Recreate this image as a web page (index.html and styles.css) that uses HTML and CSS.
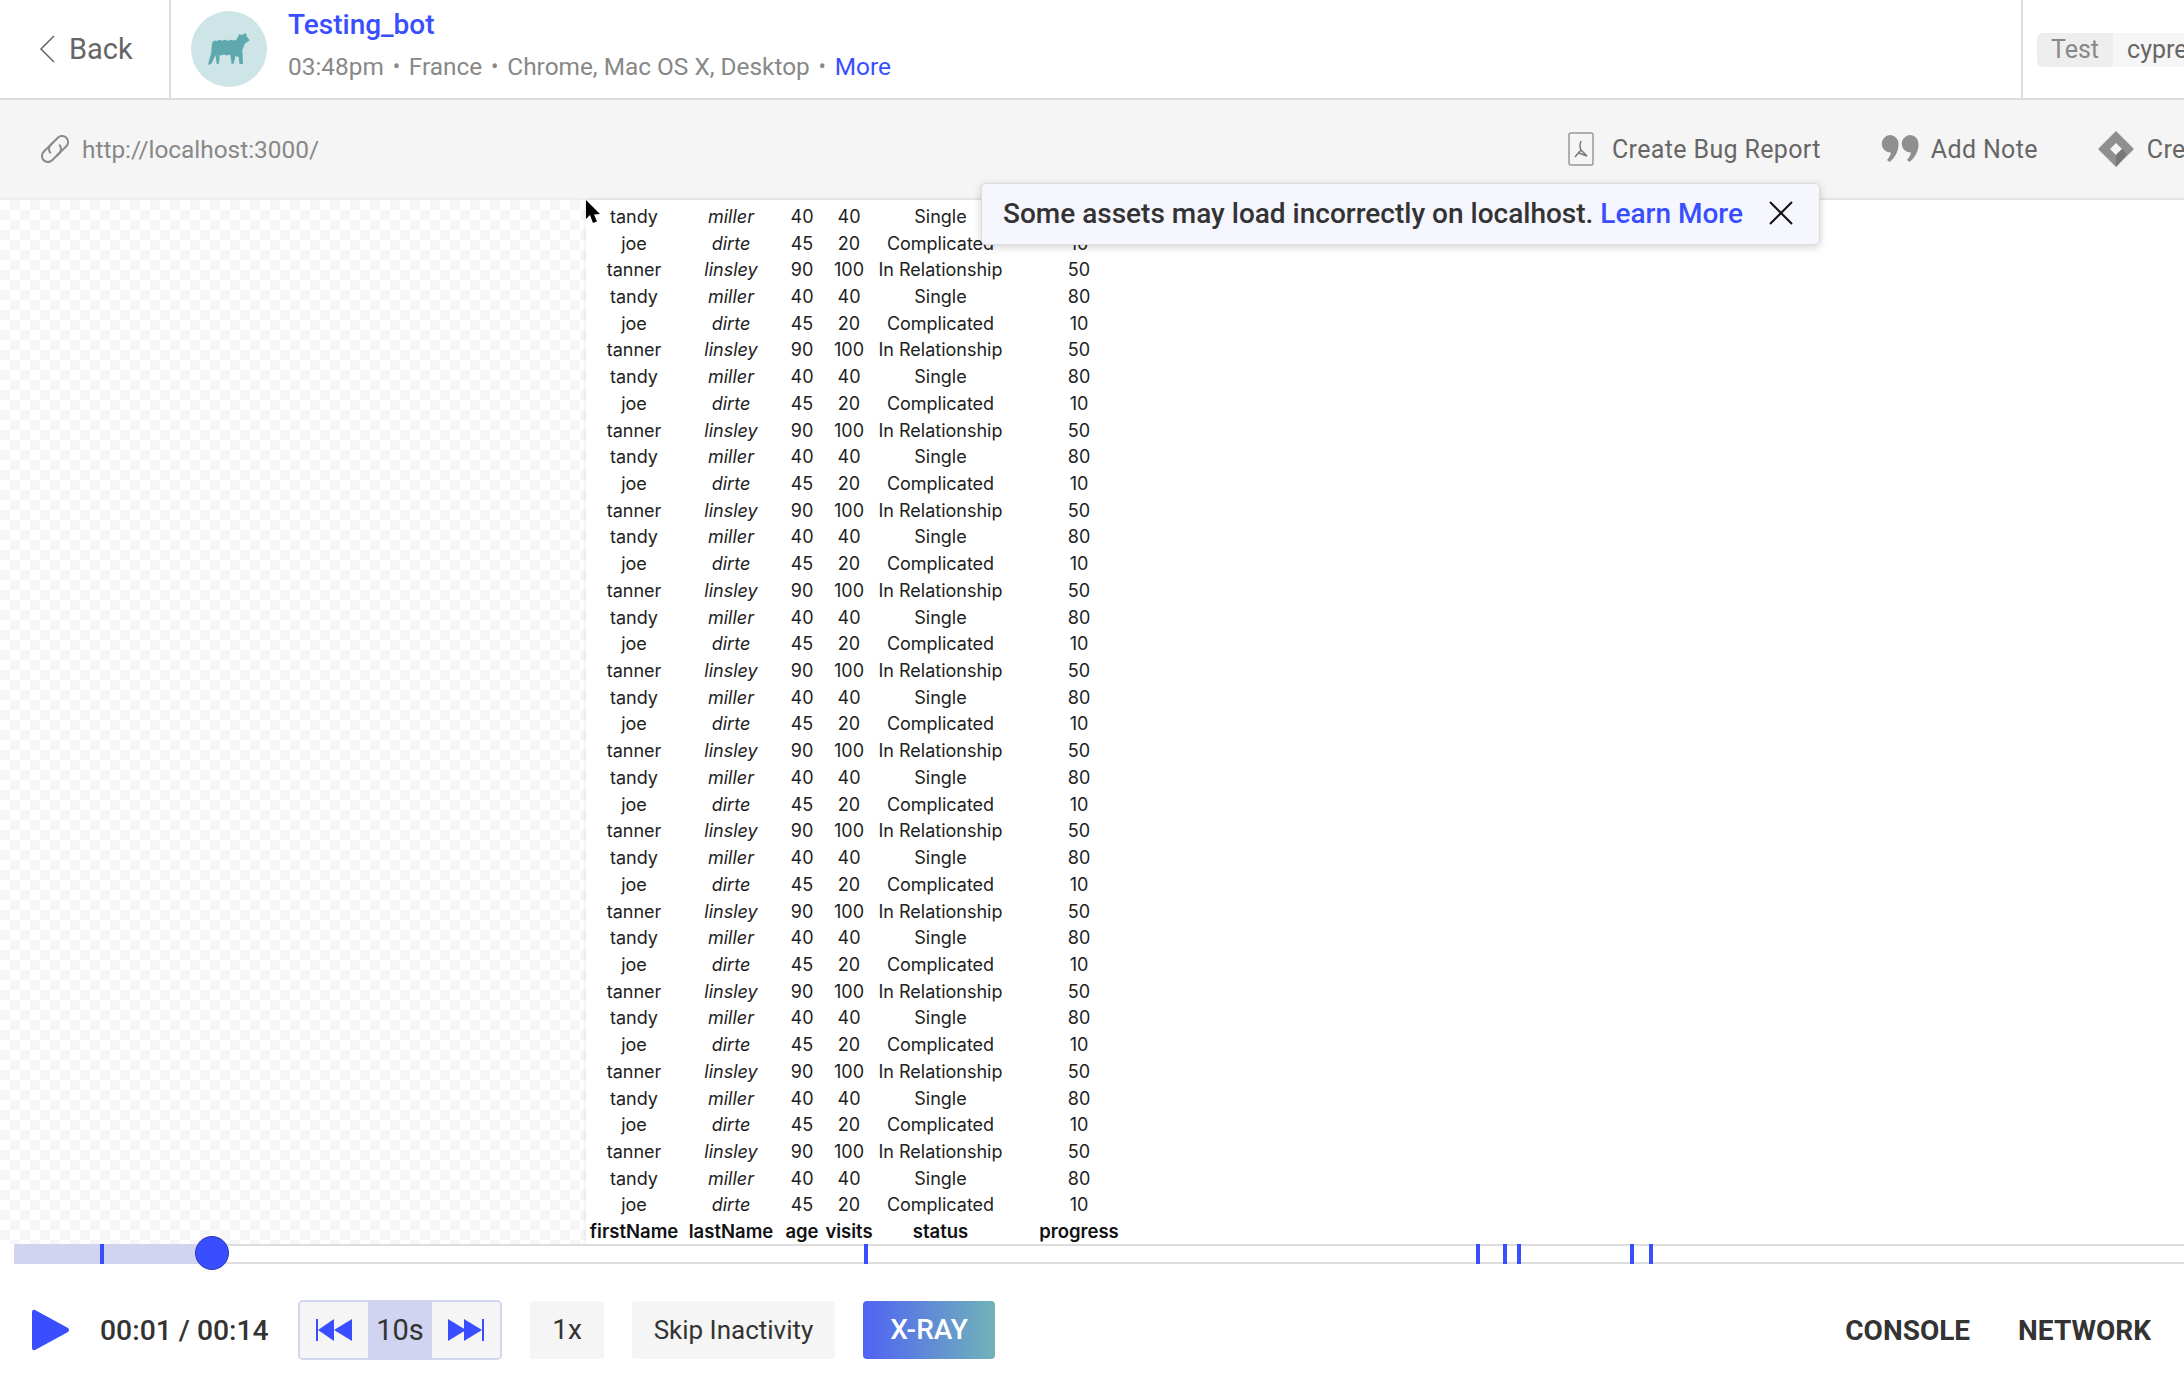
FILE: index.html
```html
<!DOCTYPE html>
<html lang="en">
<head>
  <meta charset="UTF-8">
  <title>Session Replay</title>
  <link rel="stylesheet" href="styles.css">
</head>
<body>
  <!-- Top bar -->
  <div class="topbar">
    <div class="back">
      <svg class="back-icon" width="16" height="28" viewBox="0 0 16 28"><path d="M15 1 L2 14 L15 27" fill="none" stroke="#666" stroke-width="1.500"/></svg>
      <span>Back</span>
    </div>
    <div class="user">
      <div class="avatar">
        <svg width="42" height="32" viewBox="0 0 42 32"><path d="M31.700 0.700 L33.300 2.300 L37.700 0 L39 4 L41.700 7.300 L36.700 10.700 L34.300 17.300 L35 30.700 L31.500 31.300 L30.700 24 L27.500 23 L25.700 30.700 L23.500 30.700 L22.300 21.500 L19 22.500 L16 21.500 L13 22.500 L11.700 22 L11 30.700 L8.800 31.300 L7.500 22.300 L3.300 30.700 L0 32 L3.300 19 L3.500 15 L4.300 9 L7 7.500 L9 8 L11.700 6.800 L14 7.800 L17 6.800 L20 7.800 L23 6.800 L26 7.500 L28.300 6.700 Z" fill="#5fa8ad"/></svg>
      </div>
      <div class="user-info">
        <a class="user-name">Testing_bot</a>
        <div class="user-meta">
          <span>03:48pm</span><i>•</i><span>France</span><i>•</i><span>Chrome, Mac OS X, Desktop</span><i>•</i><a>More</a>
        </div>
      </div>
    </div>
    <div class="tags">
      <div class="tag"><span class="tag-key">Test</span><span class="tag-val">cypress</span></div>
    </div>
  </div>

  <!-- Url + actions -->
  <div class="toolbar">
    <div class="url">
      <svg width="30" height="28" viewBox="0 0 30 28" fill="none" stroke="#8a8a8a" stroke-width="2"><g transform="rotate(-45 15 14)"><path d="M19 8 H5 a6 6 0 0 0 0 12 H15 a6 6 0 0 0 6-6"/><path d="M11 20 H25 a6 6 0 0 0 0-12 H15 a6 6 0 0 0-6 6"/></g></svg>
      <span>http://localhost:3000/</span>
    </div>
    <div class="actions">
      <div class="action action-bug">
        <svg width="26" height="34" viewBox="0 0 26 34"><rect x="1" y="1" width="24" height="32" rx="2" fill="none" stroke="#999" stroke-width="1.500"/><path d="M13 9 Q11 14 13 18 L7 25 M13 18 L19 24 L11 21" fill="none" stroke="#777" stroke-width="1.500"/></svg>
        <span>Create Bug Report</span>
      </div>
      <div class="action action-note">
        <svg width="38" height="30" viewBox="0 0 38 30" fill="#8f8f8f"><path d="M9 1a8.500 8.500 0 0 1 8.500 9c0 8-4 14-9 18l-2.500-2c2-2.500 3.500-5 4-7.500A8.500 8.500 0 1 1 9 1z"/><path d="M29 1a8.500 8.500 0 0 1 8.500 9c0 8-4 14-9 18l-2.500-2c2-2.500 3.500-5 4-7.500A8.500 8.500 0 1 1 29 1z"/></svg>
        <span>Add Note</span>
      </div>
      <div class="action action-jira">
        <svg width="36" height="36" viewBox="0 0 36 36"><path d="M18 0 L36 18 L18 36 L0 18 Z" fill="#8f8f8f"/><path d="M18 12 L24 18 L18 24 L12 18 Z" fill="#f5f5f5"/><path d="M24 18 L29 23 L18 36 L18 24 Z" fill="#777"/></svg>
        <span>Create Issue</span>
      </div>
    </div>
  </div>

  <!-- Player -->
  <div class="stage">
    <div class="checker"></div>
    <div class="screen">
      <table class="grid">
        <tbody id="rows"></tbody>
        <tfoot>
          <tr>
            <th class="c1">firstName</th><th class="c2">lastName</th><th class="c3">age</th><th class="c4">visits</th><th class="c5">status</th><th class="c6">progress</th>
          </tr>
        </tfoot>
      </table>
    </div>
    <svg class="cursor" width="14" height="23" viewBox="0 0 14 23"><path d="M0 0 L0 19 L4 15 L7 23 L11 21.500 L8 14.500 L14 14 Z" fill="#000"/></svg>
    <div class="notice">
      <span>Some assets may load incorrectly on localhost. <a>Learn More</a></span>
      <svg width="26" height="26" viewBox="0 0 26 26"><path d="M2 2 L24 24 M24 2 L2 24" stroke="#111" stroke-width="2"/></svg>
    </div>
  </div>

  <!-- Timeline -->
  <div class="timeline">
    <div class="played"></div>
    <i class="mark" data-x="86"></i>
    <i class="mark" data-x="850"></i>
    <i class="mark" data-x="1462"></i>
    <i class="mark" data-x="1489"></i>
    <i class="mark" data-x="1503"></i>
    <i class="mark" data-x="1616"></i>
    <i class="mark" data-x="1635"></i>
    <div class="thumb"></div>
  </div>

  <!-- Controls -->
  <div class="controls">
    <div class="controls-left">
      <svg class="play" width="38" height="42" viewBox="0 0 38 42"><path d="M3 1 L36 19 Q38 21 36 23 L3 41 Q0 42 0 39 L0 3 Q0 0 3 1 Z" fill="#394eff"/></svg>
      <div class="time">00:01 / 00:14</div>
      <div class="jump">
        <button>
          <svg width="36" height="22" viewBox="0 0 36 22" fill="#394eff"><rect x="0" y="0" width="2" height="22"/><path d="M2 11 L18 0 L18 22 Z"/><path d="M18 11 L36 0 L36 22 Z"/></svg>
        </button>
        <span class="jump-val">10s</span>
        <button>
          <svg width="36" height="22" viewBox="0 0 36 22" fill="#394eff"><path d="M0 0 L18 11 L0 22 Z"/><path d="M16 0 L34 11 L16 22 Z"/><rect x="34" y="0" width="2" height="22"/></svg>
        </button>
      </div>
      <div class="btn btn-speed">1x</div>
      <div class="btn btn-skip">Skip Inactivity</div>
      <div class="btn btn-xray">X-RAY</div>
    </div>
    <div class="controls-right">
      <span>CONSOLE</span>
      <span>NETWORK</span>
    </div>
  </div>

  <script>
    const people = [
      ['tandy', 'miller', 40, 40, 'Single', 80],
      ['joe', 'dirte', 45, 20, 'Complicated', 10],
      ['tanner', 'linsley', 90, 100, 'In Relationship', 50]
    ];
    const rows = document.getElementById('rows');
    let html = '';
    for (let i = 0; i < 40; i++) {
      const p = people[(i + 1) % 3];
      html += `<tr><td class="c1">${p[0]}</td><td class="c2"><em>${p[1]}</em></td><td class="c3">${p[2]}</td><td class="c4">${p[3]}</td><td class="c5">${p[4]}</td><td class="c6">${p[5]}</td></tr>`;
    }
    rows.innerHTML = html;
    document.querySelectorAll('.mark').forEach(m => {
      m.style.left = m.dataset.x + 'px';
    });
  </script>
</body>
</html>
```

FILE: styles.css
```css
* {
  box-sizing: border-box;
}

html, body {
  margin: 0;
  height: 100%;
  overflow: hidden;
}

body {
  width: 2184px;
  height: 1396px;
  font-family: Roboto, sans-serif;
  background: #fff;
  color: #333;
  display: flex;
  flex-direction: column;
}

a {
  color: #394eff;
}

/* top bar */
.topbar {
  height: 100px;
  flex: none;
  display: flex;
  border-bottom: 2px solid #ddd;
}

.back {
  width: 171px;
  flex: none;
  display: flex;
  align-items: center;
  gap: 14px;
  padding-left: 39px;
  border-right: 2px solid #ddd;
  font-size: 29px;
  color: #666;
}

.user {
  flex: 1;
  display: flex;
  align-items: center;
  gap: 21px;
  padding-left: 20px;
}

.avatar {
  width: 76px;
  height: 76px;
  border-radius: 50%;
  background: #cde5e6;
  display: flex;
  align-items: center;
  justify-content: center;
}

.user-info {
  display: flex;
  flex-direction: column;
  gap: 10px;
  margin-top: -6px;
}

.user-name {
  font-size: 28px;
  font-weight: 500;
  line-height: 32px;
}

.user-meta {
  display: flex;
  align-items: center;
  font-size: 24.400px;
  line-height: 32px;
  color: #888;
}

.user-meta i {
  font-style: normal;
  margin: 0 8.800px;
  font-size: 22px;
}

.tags {
  width: 163px;
  flex: none;
  display: flex;
  align-items: center;
  padding-left: 14px;
  border-left: 2px solid #ddd;
  overflow: hidden;
}

.tag {
  display: flex;
  margin-top: 2px;
  font-size: 25px;
  line-height: 34px;
  border-radius: 6px;
  background: #f6f6f6;
  white-space: nowrap;
}

.tag-key {
  padding: 0 14px;
  background: #eee;
  color: #888;
  border-radius: 6px 0 0 6px;
}

.tag-val {
  padding: 0 14px;
  color: #666;
}

/* url row */
.toolbar {
  height: 100px;
  flex: none;
  display: flex;
  align-items: center;
  justify-content: space-between;
  background: #f5f5f5;
  border-bottom: 2px solid #eee;
  overflow: hidden;
}

.url {
  display: flex;
  align-items: center;
  gap: 12px;
  padding-left: 40px;
  font-size: 24.400px;
  color: #888;
}

.actions {
  display: flex;
  align-items: center;
  flex: none;
  width: 616px;
}

.action {
  display: flex;
  align-items: center;
  font-size: 25px;
  letter-spacing: 0.350px;
  color: #666;
  white-space: nowrap;
}

.action-bug {
  gap: 18px;
  margin-right: 60px;
}

.action-note {
  gap: 12px;
  margin-right: 60px;
}

.action-jira {
  gap: 13px;
}

/* player */
.stage {
  height: 1044px;
  flex: none;
  position: relative;
  display: flex;
}

.checker {
  width: 586px;
  flex: none;
  background-color: #fff;
  background-image: conic-gradient(#f6f6f6 25%, #fff 0 50%, #f6f6f6 0 75%, #fff 0);
  background-size: 20px 20px;
}

.screen {
  flex: 1;
  display: flex;
  flex-direction: column;
  justify-content: flex-end;
  overflow: hidden;
  background: #fff;
  box-shadow: 0 0 4px rgba(0, 0, 0, 0.12);
}

.grid {
  flex: none;
  border-collapse: collapse;
  table-layout: fixed;
  width: 565px;
  font-family: Inter, sans-serif;
  font-size: 18px;
  color: #222;
}

.grid td, .grid th {
  height: 26.730px;
  padding: 0;
  text-align: center;
  white-space: nowrap;
}

.grid td {
  padding-top: 2px;
}

.grid th {
  font-size: 18.500px;
  font-weight: 600;
  color: #111;
}

.c1 { width: 96px; }
.c2 { width: 98px; }
.c3 { width: 44px; }
.c4 { width: 50px; }
.c5 { width: 133px; }
.c6 { width: 144px; }

.cursor {
  position: absolute;
  left: 586px;
  top: 0;
}

.notice {
  position: absolute;
  left: 981px;
  top: -17px;
  width: 839px;
  height: 62px;
  display: flex;
  align-items: center;
  justify-content: space-between;
  padding: 0 25px 2px 21px;
  background: #f5f6fe;
  border: 1px solid #ddd;
  border-radius: 5px;
  box-shadow: 0 2px 8px rgba(0, 0, 0, 0.18);
  font-size: 28px;
  font-weight: 500;
  color: #333;
  white-space: nowrap;
}

/* timeline */
.timeline {
  height: 20px;
  flex: none;
  margin-left: 14px;
  position: relative;
  border-top: 2px solid #ddd;
  border-bottom: 2px solid #ddd;
}

.played {
  position: absolute;
  left: 0;
  top: -2px;
  bottom: -2px;
  width: 198px;
  background: #d0d4f0;
}

.mark {
  position: absolute;
  top: -2px;
  bottom: -2px;
  width: 4px;
  background: #394eff;
}

.thumb {
  position: absolute;
  left: 181px;
  top: -10px;
  width: 34px;
  height: 34px;
  border-radius: 50%;
  background: #394eff;
  border: 1px solid #2a3bb0;
}

/* controls */
.controls {
  flex: 1;
  display: flex;
  align-items: center;
  justify-content: space-between;
  padding: 0 33px 0 32px;
}

.controls-left {
  display: flex;
  align-items: center;
}

.play {
  margin-right: 30px;
}

.time {
  font-size: 28.300px;
  font-weight: 500;
  width: 198px;
  white-space: nowrap;
}

.jump {
  display: flex;
  align-items: center;
  height: 60px;
  border: 2px solid #d0d4f0;
  border-radius: 5px;
  overflow: hidden;
  margin-right: 28px;
}

.jump button {
  width: 68px;
  height: 56px;
  padding: 0;
  border: none;
  background: #f5f5f5;
  display: flex;
  align-items: center;
  justify-content: center;
}

.jump-val {
  width: 64px;
  height: 56px;
  line-height: 56px;
  text-align: center;
  font-size: 29px;
  background: #d0d4f0;
}

.btn {
  height: 58px;
  line-height: 58px;
  text-align: center;
  font-size: 28px;
  border-radius: 4px;
  background: #f5f5f5;
  margin-right: 28px;
}

.btn-speed {
  width: 74px;
}

.btn-skip {
  width: 203px;
  font-size: 26px;
}

.btn-xray {
  width: 132px;
  margin-right: 0;
  color: #fff;
  font-weight: 500;
  background: linear-gradient(90deg, #4f63f5, #71b3b8);
}

.controls-right {
  display: flex;
  gap: 48px;
  font-size: 28px;
  font-weight: 700;
}
```
